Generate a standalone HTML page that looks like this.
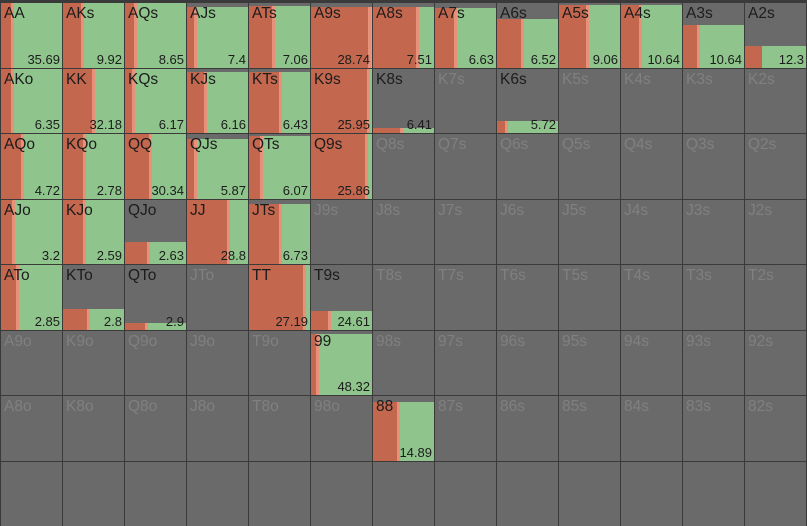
<!DOCTYPE html>
<html><head><meta charset="utf-8"><style>
html,body{margin:0;padding:0;width:807px;height:467px;overflow:hidden;background:#3a3a3a;font-family:"Liberation Sans",sans-serif}
.g{position:absolute;left:1px;top:3px;display:grid;grid-template-columns:repeat(13,61px);grid-auto-rows:64.5px;gap:1px}
.c{position:relative;background:#6a6a6a;overflow:hidden}
.c i{position:absolute;left:0;right:0;bottom:0;background:linear-gradient(90deg,#c4674f var(--r),#e8917a var(--r),#e8917a calc(var(--r) + 3px),#8fc58c calc(var(--r) + 3px))}
.c b{position:absolute;left:3px;top:2px;font-weight:normal;font-size:15.5px;color:#1c1c1c}
.c span{position:absolute;left:3px;top:2px;font-size:15.5px;color:#808080}
.c u{position:absolute;right:2px;bottom:1px;text-decoration:none;font-size:13px;color:#1c1c1c}
</style></head><body><div class="g">
<div class="c"><i style="height:100%;--r:10px"></i><b>AA</b><u>35.69</u></div>
<div class="c"><i style="height:100%;--r:18px"></i><b>AKs</b><u>9.92</u></div>
<div class="c"><i style="height:100%;--r:9px"></i><b>AQs</b><u>8.65</u></div>
<div class="c"><i style="height:94%;--r:7px"></i><b>AJs</b><u>7.4</u></div>
<div class="c"><i style="height:96%;--r:23px"></i><b>ATs</b><u>7.06</u></div>
<div class="c"><i style="height:94%;--r:57px"></i><b>A9s</b><u>28.74</u></div>
<div class="c"><i style="height:94%;--r:43px"></i><b>A8s</b><u>7.51</u></div>
<div class="c"><i style="height:93%;--r:19px"></i><b>A7s</b><u>6.63</u></div>
<div class="c"><i style="height:75%;--r:24px"></i><b>A6s</b><u>6.52</u></div>
<div class="c"><i style="height:97%;--r:27px"></i><b>A5s</b><u>9.06</u></div>
<div class="c"><i style="height:97%;--r:18px"></i><b>A4s</b><u>10.64</u></div>
<div class="c"><i style="height:66%;--r:14px"></i><b>A3s</b><u>10.64</u></div>
<div class="c"><i style="height:34%;--r:17px;background:linear-gradient(90deg,#c4674f 17px,#8fc58c 17px)"></i><b>A2s</b><u>12.3</u></div>

<div class="c"><i style="height:100%;--r:10px"></i><b>AKo</b><u>6.35</u></div>
<div class="c"><i style="height:100%;--r:29px"></i><b>KK</b><u>32.18</u></div>
<div class="c"><i style="height:100%;--r:7px"></i><b>KQs</b><u>6.17</u></div>
<div class="c"><i style="height:94%;--r:17px"></i><b>KJs</b><u>6.16</u></div>
<div class="c"><i style="height:94%;--r:30px"></i><b>KTs</b><u>6.43</u></div>
<div class="c"><i style="height:100%;--r:56px"></i><b>K9s</b><u>25.95</u></div>
<div class="c"><i style="height:8%;--r:27px"></i><b>K8s</b><u>6.41</u></div>
<div class="c"><span>K7s</span></div>
<div class="c"><i style="height:18%;--r:8px"></i><b>K6s</b><u>5.72</u></div>
<div class="c"><span>K5s</span></div>
<div class="c"><span>K4s</span></div>
<div class="c"><span>K3s</span></div>
<div class="c"><span>K2s</span></div>

<div class="c"><i style="height:100%;--r:20px"></i><b>AQo</b><u>4.72</u></div>
<div class="c"><i style="height:100%;--r:20px"></i><b>KQo</b><u>2.78</u></div>
<div class="c"><i style="height:100%;--r:24px"></i><b>QQ</b><u>30.34</u></div>
<div class="c"><i style="height:93%;--r:7px"></i><b>QJs</b><u>5.87</u></div>
<div class="c"><i style="height:97%;--r:11px"></i><b>QTs</b><u>6.07</u></div>
<div class="c"><i style="height:100%;--r:54px"></i><b>Q9s</b><u>25.86</u></div>
<div class="c"><span>Q8s</span></div>
<div class="c"><span>Q7s</span></div>
<div class="c"><span>Q6s</span></div>
<div class="c"><span>Q5s</span></div>
<div class="c"><span>Q4s</span></div>
<div class="c"><span>Q3s</span></div>
<div class="c"><span>Q2s</span></div>

<div class="c"><i style="height:100%;--r:11px"></i><b>AJo</b><u>3.2</u></div>
<div class="c"><i style="height:100%;--r:20px"></i><b>KJo</b><u>2.59</u></div>
<div class="c"><i style="height:34%;--r:22px"></i><b>QJo</b><u>2.63</u></div>
<div class="c"><i style="height:100%;--r:40px"></i><b>JJ</b><u>28.8</u></div>
<div class="c"><i style="height:93%;--r:30px"></i><b>JTs</b><u>6.73</u></div>
<div class="c"><span>J9s</span></div>
<div class="c"><span>J8s</span></div>
<div class="c"><span>J7s</span></div>
<div class="c"><span>J6s</span></div>
<div class="c"><span>J5s</span></div>
<div class="c"><span>J4s</span></div>
<div class="c"><span>J3s</span></div>
<div class="c"><span>J2s</span></div>

<div class="c"><i style="height:100%;--r:15px"></i><b>ATo</b><u>2.85</u></div>
<div class="c"><i style="height:32%;--r:24px"></i><b>KTo</b><u>2.8</u></div>
<div class="c"><i style="height:10%;--r:20px"></i><b>QTo</b><u>2.9</u></div>
<div class="c"><span>JTo</span></div>
<div class="c"><i style="height:100%;--r:54px"></i><b>TT</b><u>27.19</u></div>
<div class="c"><i style="height:29%;--r:17px"></i><b>T9s</b><u>24.61</u></div>
<div class="c"><span>T8s</span></div>
<div class="c"><span>T7s</span></div>
<div class="c"><span>T6s</span></div>
<div class="c"><span>T5s</span></div>
<div class="c"><span>T4s</span></div>
<div class="c"><span>T3s</span></div>
<div class="c"><span>T2s</span></div>

<div class="c"><span>A9o</span></div>
<div class="c"><span>K9o</span></div>
<div class="c"><span>Q9o</span></div>
<div class="c"><span>J9o</span></div>
<div class="c"><span>T9o</span></div>
<div class="c"><i style="height:95%;--r:5px"></i><b>99</b><u>48.32</u></div>
<div class="c"><span>98s</span></div>
<div class="c"><span>97s</span></div>
<div class="c"><span>96s</span></div>
<div class="c"><span>95s</span></div>
<div class="c"><span>94s</span></div>
<div class="c"><span>93s</span></div>
<div class="c"><span>92s</span></div>

<div class="c"><span>A8o</span></div>
<div class="c"><span>K8o</span></div>
<div class="c"><span>Q8o</span></div>
<div class="c"><span>J8o</span></div>
<div class="c"><span>T8o</span></div>
<div class="c"><span>98o</span></div>
<div class="c"><i style="height:90%;--r:24px"></i><b>88</b><u>14.89</u></div>
<div class="c"><span>87s</span></div>
<div class="c"><span>86s</span></div>
<div class="c"><span>85s</span></div>
<div class="c"><span>84s</span></div>
<div class="c"><span>83s</span></div>
<div class="c"><span>82s</span></div>

<div class="c"></div><div class="c"></div><div class="c"></div><div class="c"></div><div class="c"></div><div class="c"></div><div class="c"></div><div class="c"></div><div class="c"></div><div class="c"></div><div class="c"></div><div class="c"></div><div class="c"></div>
</div></body></html>
